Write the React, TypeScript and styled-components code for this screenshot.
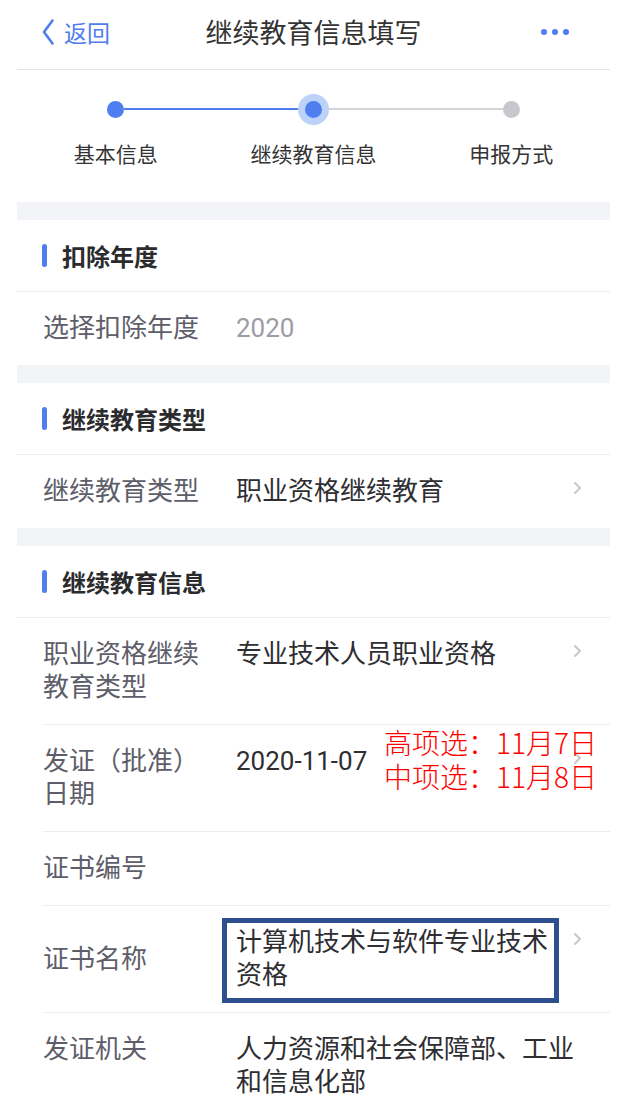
import styled, { createGlobalStyle } from 'styled-components';

const BLUE = '#4e7ef0';

const GlobalStyle = createGlobalStyle`
    body {
        margin: 0;
        background: #fff;
        font-family: Roboto, "Noto Sans CJK SC", sans-serif;
        -webkit-font-smoothing: antialiased;
    }
`;

const Page = styled.div`
    width: 593px;
    margin-left: 17px;
`;

const NavBar = styled.header`
    height: 70px;
    padding-bottom: 6px;
    box-sizing: border-box;
    border-bottom: 1px solid #e4e4e8;
    display: grid;
    grid-template-columns: 1fr auto 1fr;
    align-items: center;
`;

const BackButton = styled.button`
    justify-self: start;
    display: flex;
    align-items: center;
    gap: 10px;
    padding: 0 0 0 25px;
    border: none;
    background: none;
    color: ${BLUE};
    font-family: inherit;
    font-size: 23px;
    cursor: pointer;
`;

const Title = styled.h1`
    margin: 0;
    font-size: 27px;
    font-weight: 400;
    color: #333;
`;

const More = styled.div`
    justify-self: end;
    display: flex;
    gap: 5px;
    padding-right: 41px;
`;

const MoreDot = styled.span`
    width: 6px;
    height: 6px;
    border-radius: 50%;
    background: ${BLUE};
`;

const Stepper = styled.div`
    height: 132px;
    display: grid;
    grid-template-columns: repeat(3, 1fr);
    padding-top: 23px;
    box-sizing: border-box;
`;

const Step = styled.div`
    display: flex;
    flex-direction: column;
    align-items: center;
`;

const Track = styled.div`
    width: 100%;
    height: 32px;
    display: flex;
    align-items: center;
`;

const HalfLine = styled.div<{ $color: string }>`
    flex: 1;
    height: 2px;
    background: ${(p) => p.$color};
`;

const StepDot = styled.div<{ $color: string; $active?: boolean }>`
    position: relative;
    z-index: 1;
    width: 17px;
    height: 17px;
    border-radius: 50%;
    background: ${(p) => p.$color};
    box-shadow: ${(p) => (p.$active ? '0 0 0 7px #bdd2f8' : 'none')};
`;

const StepLabel = styled.div`
    margin-top: 16px;
    font-size: 21px;
    line-height: 28px;
    color: #333;
`;

const Gap = styled.div`
    height: 18px;
    background: #f3f4f8;
`;

const SectionHeader = styled.div`
    height: 71px;
    display: flex;
    align-items: center;
    padding-left: 25px;
    border-bottom: 1px solid #ececf0;
    font-size: 24px;
    font-weight: 700;
    color: #2b2b2e;

    &::before {
        content: '';
        width: 5px;
        height: 23px;
        border-radius: 3px;
        background: ${BLUE};
        margin-right: 15px;
    }
`;

const Row = styled.div<{ $divided?: boolean }>`
    position: relative;
    display: grid;
    grid-template-columns: 193px 1fr 24px;
    margin-left: 26px;
    padding: 20px 28px 20px 0;
    font-size: 26px;
    line-height: 33px;
    border-bottom: ${(p) => (p.$divided ? '1px solid #ececf0' : 'none')};
`;

const Label = styled.div<{ $center?: boolean }>`
    align-self: ${(p) => (p.$center ? 'center' : 'start')};
    padding-right: 30px;
    color: #5e5e6a;
`;

const Value = styled.div<{ $muted?: boolean; $wide?: boolean }>`
    position: relative;
    grid-column: ${(p) => (p.$wide ? 'span 2' : 'auto')};
    color: ${(p) => (p.$muted ? '#9c9ca7' : '#2e2e33')};
`;

const Arrow = styled.div`
    display: flex;
    justify-content: flex-end;
    padding-top: 6px;
`;

const Note = styled.div`
    position: absolute;
    top: 0;
    left: 341px;
    font-family: "Noto Sans CJK SC", sans-serif;
    font-size: 28px;
    font-weight: 300;
    color: #ff0000;
`;

const NoteLine = styled.div`
    height: 34px;
    line-height: 34px;
    white-space: nowrap;
`;

const Highlight = styled.div`
    position: absolute;
    left: -14px;
    top: -8px;
    width: 337px;
    height: 85px;
    border: 5px solid #2d4f8e;
    box-sizing: border-box;
`;

function Chevron() {
    return (
        <Arrow>
            <svg width="9" height="14" viewBox="0 0 9 14">
                <path d="M2 2 L7 7 L2 12" fill="none" stroke="#c8c8cd" strokeWidth="2" strokeLinecap="round" strokeLinejoin="round" />
            </svg>
        </Arrow>
    );
}

const steps = [
    { label: '基本信息', left: 'transparent', right: BLUE, dot: BLUE, active: false },
    { label: '继续教育信息', left: BLUE, right: '#d3d3d9', dot: BLUE, active: true },
    { label: '申报方式', left: '#d3d3d9', right: 'transparent', dot: '#c7c7cd', active: false },
];

export default function App() {
    return (
        <>
            <GlobalStyle />
            <Page>
                <NavBar>
                    <BackButton>
                        <svg width="12" height="26" viewBox="0 0 12 26">
                            <path d="M10.5 1.5 L2 13 L10.5 24.5" fill="none" stroke={BLUE} strokeWidth="2.6" strokeLinecap="round" strokeLinejoin="round" />
                        </svg>
                        返回
                    </BackButton>
                    <Title>继续教育信息填写</Title>
                    <More>
                        <MoreDot />
                        <MoreDot />
                        <MoreDot />
                    </More>
                </NavBar>

                <Stepper>
                    {steps.map((s) => (
                        <Step key={s.label}>
                            <Track>
                                <HalfLine $color={s.left} />
                                <StepDot $color={s.dot} $active={s.active} />
                                <HalfLine $color={s.right} />
                            </Track>
                            <StepLabel>{s.label}</StepLabel>
                        </Step>
                    ))}
                </Stepper>

                <Gap />
                <SectionHeader>扣除年度</SectionHeader>
                <Row>
                    <Label>选择扣除年度</Label>
                    <Value $muted $wide>2020</Value>
                </Row>

                <Gap />
                <SectionHeader>继续教育类型</SectionHeader>
                <Row>
                    <Label>继续教育类型</Label>
                    <Value>职业资格继续教育</Value>
                    <Chevron />
                </Row>

                <Gap />
                <SectionHeader>继续教育信息</SectionHeader>
                <Row $divided>
                    <Label>职业资格继续教育类型</Label>
                    <Value>专业技术人员职业资格</Value>
                    <Chevron />
                </Row>
                <Row $divided>
                    <Label>发证（批准）日期</Label>
                    <Value>2020-11-07</Value>
                    <Chevron />
                    <Note>
                        <NoteLine>高项选：11月7日</NoteLine>
                        <NoteLine>中项选：11月8日</NoteLine>
                    </Note>
                </Row>
                <Row $divided>
                    <Label>证书编号</Label>
                    <Value $wide />
                </Row>
                <Row $divided>
                    <Label $center>证书名称</Label>
                    <Value>
                        计算机技术与软件专业技术资格
                        <Highlight />
                    </Value>
                    <Chevron />
                </Row>
                <Row>
                    <Label>发证机关</Label>
                    <Value $wide>人力资源和社会保障部、工业和信息化部</Value>
                </Row>
            </Page>
        </>
    );
}
